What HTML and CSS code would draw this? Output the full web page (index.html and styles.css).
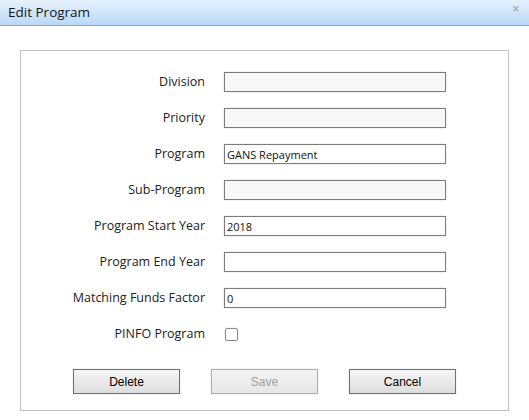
FILE: index.html
```html
<!DOCTYPE html>
<html>
<head>
<meta charset="utf-8">
<link rel="stylesheet" href="styles.css">
</head>
<body>
<div class="titlebar">
  <span class="title">Edit Program</span>
  <span class="close">&#x2715;</span>
</div>
<div class="panel">
  <div class="row"><label class="lbl">Division</label><input class="field disabled" type="text" value=""></div>
  <div class="row"><label class="lbl">Priority</label><input class="field disabled" type="text" value=""></div>
  <div class="row"><label class="lbl">Program</label><input class="field" type="text" value="GANS Repayment"></div>
  <div class="row"><label class="lbl">Sub-Program</label><input class="field disabled" type="text" value=""></div>
  <div class="row"><label class="lbl">Program Start Year</label><input class="field" type="text" value="2018"></div>
  <div class="row"><label class="lbl">Program End Year</label><input class="field" type="text" value=""></div>
  <div class="row"><label class="lbl">Matching Funds Factor</label><input class="field" type="text" value="0"></div>
  <div class="row"><label class="lbl">PINFO Program</label><span class="check"></span></div>
  <div class="buttons">
    <button class="btn">Delete</button>
    <button class="btn off">Save</button>
    <button class="btn">Cancel</button>
  </div>
</div>
</body>
</html>
```
FILE: styles.css
```css
html, body {
  margin: 0;
  padding: 0;
  background: #ffffff;
  font-family: "Open Sans", "Noto Sans", sans-serif;
}
.titlebar {
  height: 25px;
  border-bottom: 1px solid #7eaedb;
  background: linear-gradient(#e6f1fd, #b9d9f9);
  display: flex;
  align-items: center;
  justify-content: space-between;
  padding: 0 8px 0 8px;
}
.title {
  font-size: 13.5px;
  color: #151515;
  margin-top: -1px;
}
.close {
  font-size: 9px;
  font-weight: bold;
  color: #a3adb8;
  margin-top: -8px;
  margin-right: 1px;
}
.panel {
  margin: 24px 0 0 20px;
  width: 487px;
  border: 1px solid #c0c0c0;
  padding: 13px 0 16px 0;
}
.row {
  height: 36px;
  display: flex;
  align-items: center;
}
.lbl {
  width: 184px;
  text-align: right;
  font-size: 12.5px;
  line-height: 16px;
  color: #222222;
  margin-right: 19px;
}
.field {
  box-sizing: border-box;
  width: 222px;
  height: 20px;
  margin: 0;
  border: 1px solid #7c7c7c;
  box-shadow: 0 0 2px #d8d8d8;
  background: #ffffff;
  padding: 0 2px;
  font-family: "Open Sans", "Noto Sans", sans-serif;
  font-size: 11px;
  color: #111;
  outline: none;
}
.field.disabled {
  background: #f8f8f8;
}
.check {
  box-sizing: border-box;
  width: 13px;
  height: 13px;
  margin-left: 1px;
  border: 1px solid #8a8a8a;
  border-radius: 2px;
  background: #ffffff;
  box-shadow: 0 0 2px #d0d0d0;
}
.buttons {
  display: flex;
  justify-content: center;
  gap: 31px;
  margin-top: 17px;
}
.btn {
  box-sizing: border-box;
  width: 107px;
  height: 25px;
  margin: 0;
  border: 1px solid #707070;
  background: linear-gradient(#f6f6f6, #dddddd);
  box-shadow: 0 0 2px #e0e0e0;
  font-family: "Liberation Sans", Arial, sans-serif;
  font-size: 12px;
  color: #000;
  padding: 0;
}
.btn.off {
  border-color: #adadad;
  color: #a0a0a0;
  background: linear-gradient(#f4f4f4, #e6e6e6);
}
```
